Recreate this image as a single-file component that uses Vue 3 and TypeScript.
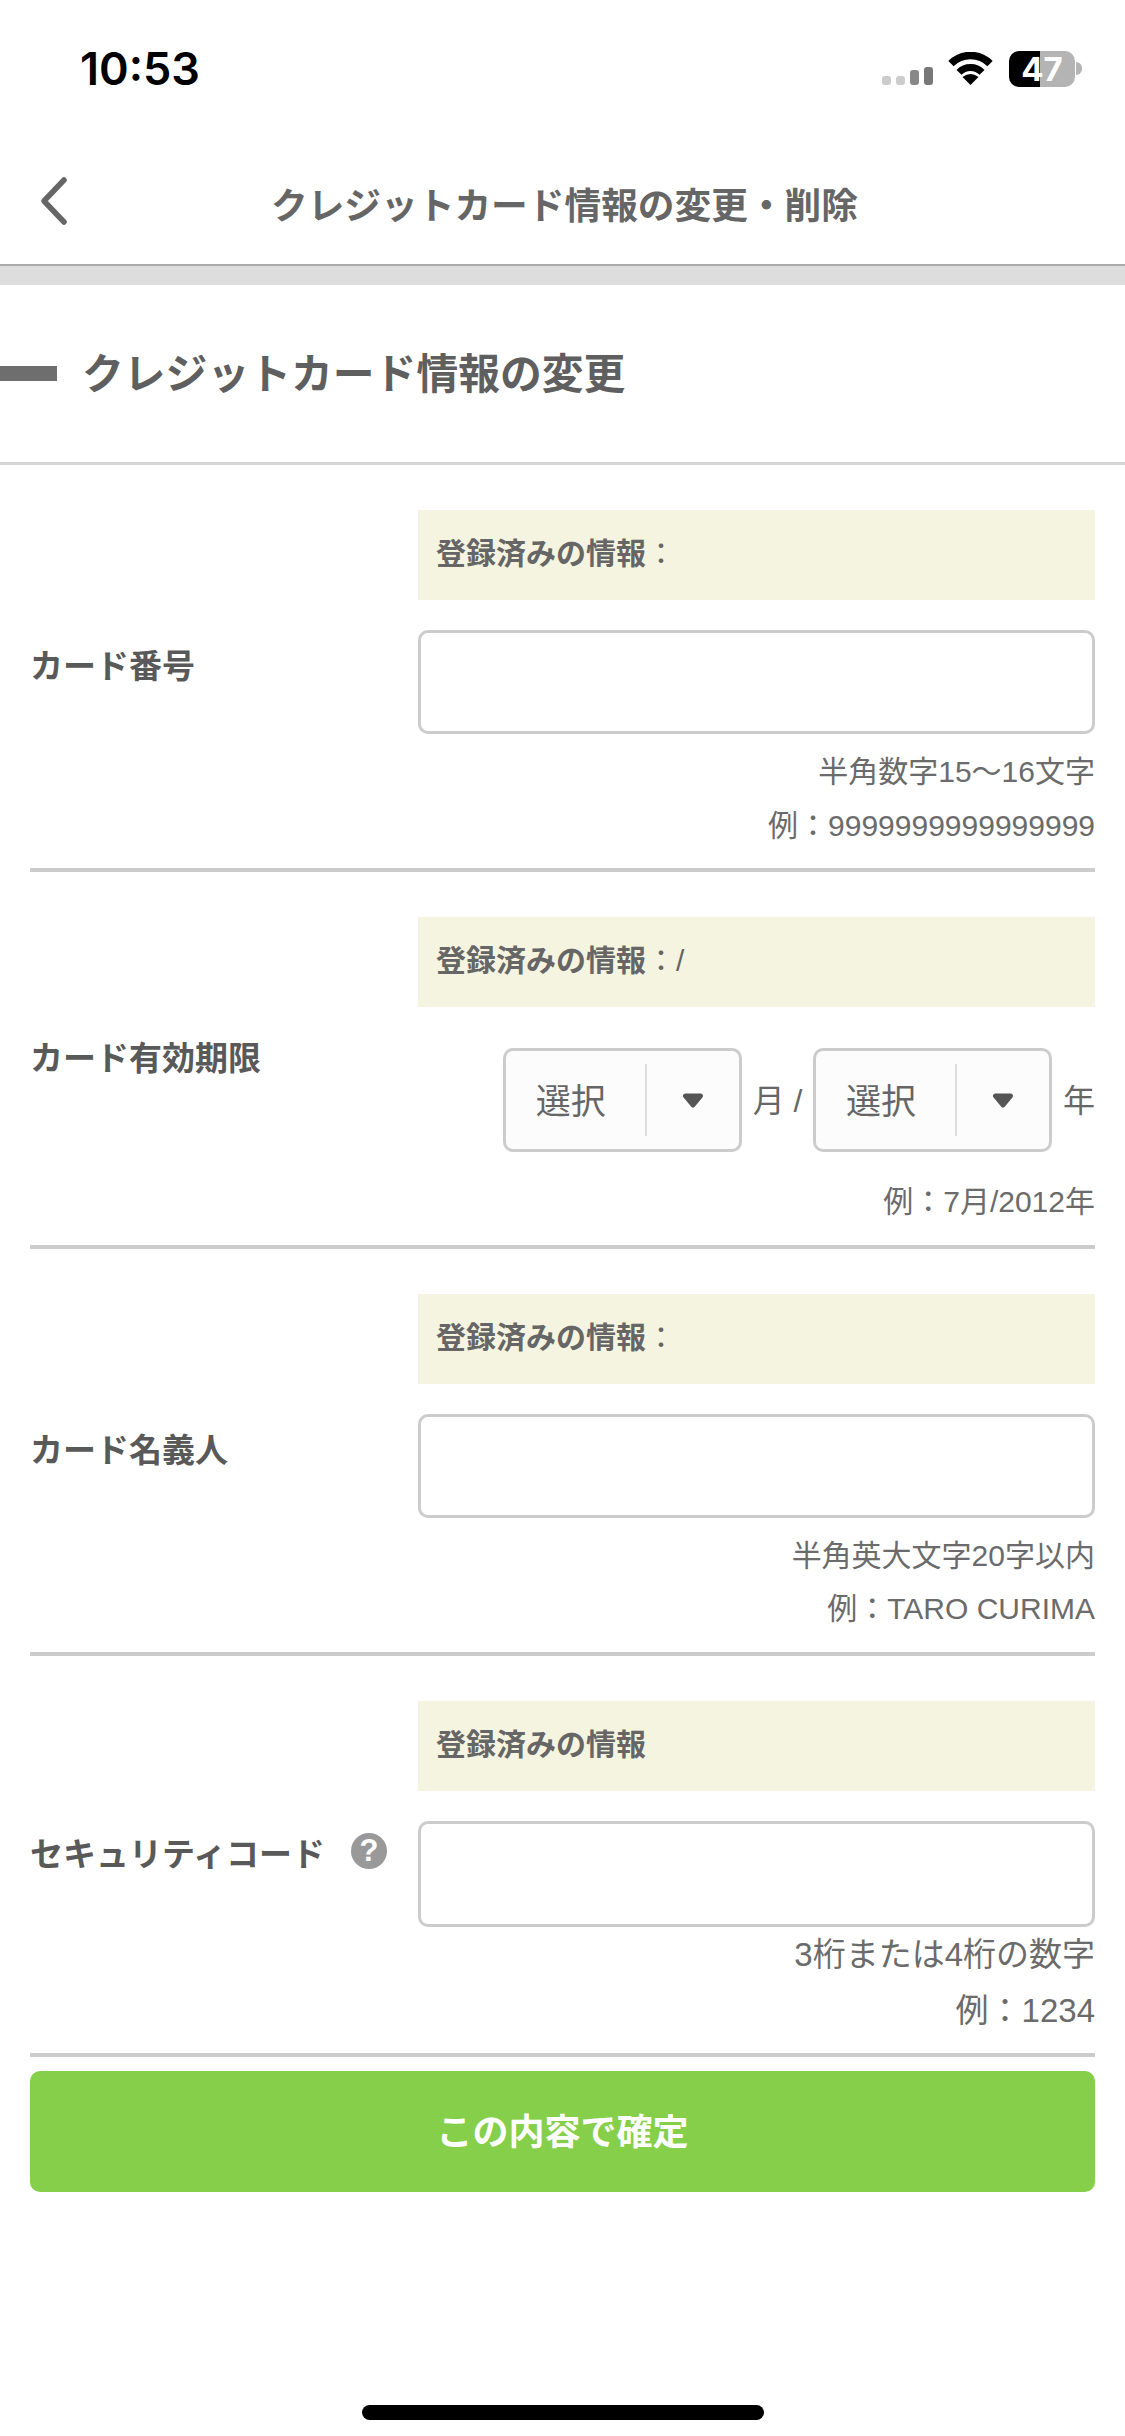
<script setup lang="ts">
const expiryFields: string[] = ['月 /', '年']
</script>

<template>
  <div class="page">
    <div class="status-bar">
      <span class="time">10:53</span>
      <div class="status-icons">
        <svg class="signal" width="51" height="18" viewBox="0 0 51 18">
          <rect x="0" y="9" width="9" height="9" rx="3" fill="#cccccc" />
          <rect x="14" y="9" width="9" height="9" rx="3" fill="#cccccc" />
          <rect x="28" y="3" width="9" height="15" rx="3" fill="#888888" />
          <rect x="42" y="0" width="9" height="18" rx="3" fill="#777777" />
        </svg>
        <svg class="wifi" width="45" height="33" viewBox="0 0 45 33">
          <path d="M3 11.6 A27.5 27.5 0 0 1 42 11.6" fill="none" stroke="#000" stroke-width="7.5" />
          <path d="M11 20.4 A16 16 0 0 1 34 20.4" fill="none" stroke="#000" stroke-width="7" />
          <path d="M22.5 33 L14.5 25 Q22.5 19 30.5 25 Z" fill="#000" />
        </svg>
        <div class="battery">47</div>
        <div class="battery-nub"></div>
      </div>
    </div>

    <header class="nav">
      <div class="nav-side back">
        <svg width="30" height="50" viewBox="0 0 30 50">
          <path d="M25 4 L5 25 L25 46" fill="none" stroke="#666" stroke-width="5.5" stroke-linecap="round" stroke-linejoin="round" />
        </svg>
      </div>
      <h1 class="nav-title">クレジットカード情報の変更・削除</h1>
      <div class="nav-side"></div>
    </header>
    <div class="band"></div>

    <section class="section-head">
      <span class="section-bar"></span>
      <h2>クレジットカード情報の変更</h2>
    </section>

    <form class="form" @submit.prevent>
      <div class="row">
        <div class="label">カード番号</div>
        <div class="field">
          <div class="notice"><b>登録済みの情報</b>：</div>
          <input class="text-input" type="text" />
          <p class="hint first">半角数字15～16文字</p>
          <p class="hint">例：9999999999999999</p>
        </div>
      </div>

      <div class="row">
        <div class="label expiry">カード有効期限</div>
        <div class="field">
          <div class="notice"><b>登録済みの情報</b>：/</div>
          <div class="selects">
            <template v-for="unit in expiryFields" :key="unit">
              <div class="select">
                <span class="select-value">選択</span>
                <span class="select-arrow">
                  <svg width="22" height="15" viewBox="0 0 22 15">
                    <path d="M3.5 3 H18.5 L11 12 Z" fill="#555" stroke="#555" stroke-width="5" stroke-linejoin="round" />
                  </svg>
                </span>
              </div>
              <span class="unit">{{ unit }}</span>
            </template>
          </div>
          <p class="hint expiry-hint">例：7月/2012年</p>
        </div>
      </div>

      <div class="row">
        <div class="label">カード名義人</div>
        <div class="field">
          <div class="notice"><b>登録済みの情報</b>：</div>
          <input class="text-input" type="text" />
          <p class="hint first">半角英大文字20字以内</p>
          <p class="hint">例：TARO CURIMA</p>
        </div>
      </div>

      <div class="row last">
        <div class="label security-label">セキュリティコード<span class="help">?</span></div>
        <div class="field">
          <div class="notice"><b>登録済みの情報</b></div>
          <input class="text-input security" type="text" />
          <p class="hint large">3桁または4桁の数字</p>
          <p class="hint large">例：1234</p>
        </div>
      </div>

      <button class="submit" type="submit">この内容で確定</button>
    </form>

    <div class="home-bar"></div>
  </div>
</template>

<style>
html,
body {
  background: #fff;
}
</style>

<style scoped>
.page {
  width: 1125px;
  font-family: "Liberation Sans", "Noto Sans CJK JP", sans-serif;
  color: #666;
}

.status-bar {
  height: 100px;
  box-sizing: border-box;
  padding: 44px 43px 0 80px;
  display: flex;
  justify-content: space-between;
  align-items: flex-start;
}

.time {
  font-family: Inter, "Liberation Sans", sans-serif;
  font-size: 45px;
  line-height: 50px;
  font-weight: 600;
  color: #000;
}

.status-icons {
  display: flex;
  align-items: flex-end;
  height: 36px;
  margin-top: 7px;
}

.signal {
  margin-right: 15px;
  margin-bottom: 2px;
}

.wifi {
  margin-right: 16px;
  margin-bottom: 2px;
}

.battery {
  width: 66px;
  height: 36px;
  border-radius: 10px;
  background: linear-gradient(90deg, #000 47%, #b4b4b4 47%);
  color: #fff;
  font-family: Inter, "Liberation Sans", sans-serif;
  font-size: 33px;
  font-weight: 700;
  line-height: 36px;
  text-align: center;
}

.battery-nub {
  width: 6px;
  height: 13px;
  margin: 0 0 12px 1px;
  background: #b4b4b4;
  border-radius: 0 6px 6px 0;
}

.nav {
  height: 166px;
  box-sizing: border-box;
  padding-top: 40px;
  border-bottom: 2px solid #aaa;
  display: grid;
  grid-template-columns: 1fr auto 1fr;
  align-items: center;
}

.nav-side {
  padding-left: 39px;
  display: flex;
}

.nav-side.back {
  margin-bottom: 3px;
}

.nav-title {
  margin: 9px 0 0;
  padding-left: 4px;
  font-size: 36.7px;
  font-weight: 700;
  line-height: 48px;
  color: #666;
}

.band {
  height: 19px;
  background: #ddd;
}

.section-head {
  height: 180px;
  box-sizing: border-box;
  border-bottom: 3px solid #d5d5d5;
  display: flex;
  align-items: center;
  gap: 25px;
}

.section-bar {
  width: 57px;
  height: 15px;
  background: #6e6e6e;
}

.section-head h2 {
  margin: 0 0 6px;
  font-size: 41.8px;
  font-weight: 700;
  color: #5f5f5f;
}

.form {
  padding: 0 30px;
}

.row {
  display: grid;
  grid-template-columns: 388px 677px;
  padding: 45px 0 16px;
  border-bottom: 4px solid #ccc;
}

.row.last {
  padding-bottom: 14px;
}

.label {
  padding-top: 137px;
  font-size: 33px;
  line-height: 40px;
  font-weight: 700;
  color: #595959;
  display: flex;
  align-items: flex-start;
}

.label.expiry {
  padding-top: 122px;
}

.label.security-label {
  padding-top: 134px;
}

.help {
  width: 36px;
  height: 36px;
  margin: -2px 0 0 26px;
  border-radius: 50%;
  background: #999;
  color: #fff;
  font-size: 31px;
  line-height: 36px;
  text-align: center;
}

.notice {
  height: 90px;
  box-sizing: border-box;
  padding-left: 18px;
  background: #f5f4e0;
  font-size: 30px;
  line-height: 88px;
  color: #666;
}

.notice b {
  font-weight: 700;
}

.text-input {
  display: block;
  width: 100%;
  height: 104px;
  box-sizing: border-box;
  margin: 30px 0 0;
  border: 3px solid #ccc;
  border-radius: 10px;
  background: #fff;
  outline: none;
}

.text-input.security {
  height: 106px;
}

.hint {
  margin: 0;
  font-size: 30px;
  line-height: 53.5px;
  text-align: right;
  color: #6b6b6b;
}

.hint.first {
  margin-top: 11px;
}

.hint.expiry-hint {
  margin-top: 23px;
}

.hint.large {
  font-size: 33px;
  line-height: 56px;
}

.selects {
  margin-top: 41px;
  display: flex;
  justify-content: flex-end;
  align-items: center;
  gap: 10.5px;
}

.select {
  width: 239.5px;
  height: 104px;
  box-sizing: border-box;
  border: 3px solid #ccc;
  border-radius: 10px;
  background: #fcfcfc;
  display: flex;
  align-items: center;
}

.select-value {
  width: 139px;
  box-sizing: border-box;
  padding: 0 0 4px 30px;
  font-size: 35px;
  color: #666;
}

.select-arrow {
  flex: 1;
  height: 72px;
  border-left: 2px solid #ddd;
  display: flex;
  align-items: center;
  justify-content: center;
}

.unit {
  padding-bottom: 4px;
  font-size: 32px;
  color: #666;
}

.submit {
  display: block;
  width: 100%;
  height: 121px;
  margin-top: 14px;
  padding-bottom: 5px;
  border: none;
  border-radius: 10px;
  background: #86cf4b;
  color: #fff;
  font-family: inherit;
  font-size: 36px;
  font-weight: 700;
}

.home-bar {
  width: 402px;
  height: 15px;
  margin: 213px auto 10px;
  border-radius: 8px;
  background: #000;
}
</style>
